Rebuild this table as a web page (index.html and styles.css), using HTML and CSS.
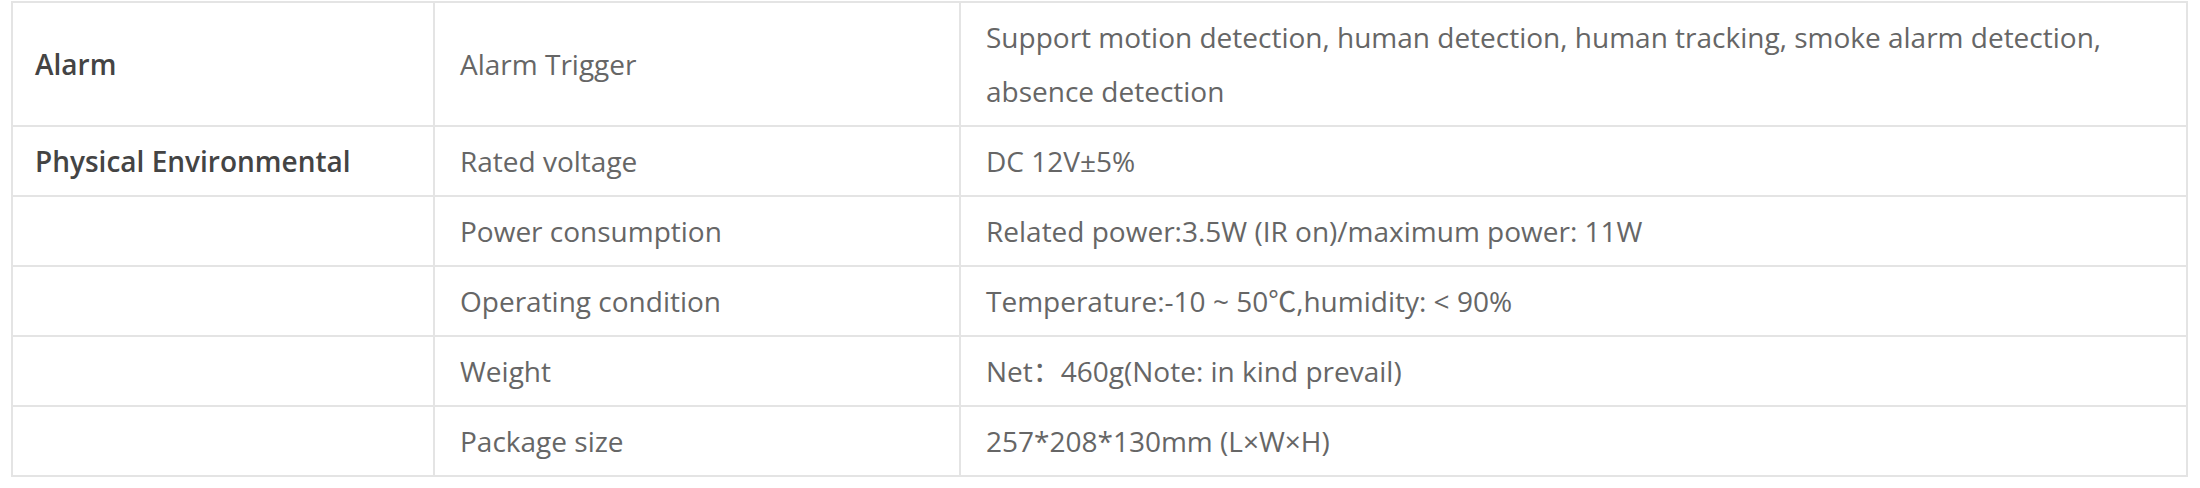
FILE: index.html
```html
<!DOCTYPE html>
<html lang="en">
<head>
<meta charset="utf-8">
<title>Specifications</title>
<link rel="stylesheet" href="styles.css">
</head>
<body>
<div class="wrap">
<table class="spec">
  <colgroup>
    <col class="c1">
    <col class="c2">
    <col class="c3">
  </colgroup>
  <tbody>
    <tr>
      <td class="cat">Alarm</td>
      <td>Alarm Trigger</td>
      <td>Support motion detection, human detection, human tracking, smoke alarm detection, absence detection</td>
    </tr>
    <tr>
      <td class="cat">Physical Environmental</td>
      <td>Rated voltage</td>
      <td>DC 12V±5%</td>
    </tr>
    <tr>
      <td class="cat"></td>
      <td>Power consumption</td>
      <td>Related power:3.5W (IR on)/maximum power: 11W</td>
    </tr>
    <tr>
      <td class="cat"></td>
      <td>Operating condition</td>
      <td>Temperature:-10 ~ 50℃,humidity: &lt; 90%</td>
    </tr>
    <tr>
      <td class="cat"></td>
      <td>Weight</td>
      <td>Net：460g(Note: in kind prevail)</td>
    </tr>
    <tr>
      <td class="cat"></td>
      <td>Package size</td>
      <td>257*208*130mm (L×W×H)</td>
    </tr>
  </tbody>
</table>
</div>
</body>
</html>
```

FILE: styles.css
```css
html, body {
  margin: 0;
  padding: 0;
  background: #ffffff;
}

.wrap {
  padding: 1px 12px 0 11px;
}

.spec {
  width: 100%;
  table-layout: fixed;
  border-collapse: collapse;
  font-family: "Open Sans", "Noto Sans CJK SC", sans-serif;
  font-size: 28px;
  line-height: 54px;
  color: #666666;
}

.spec .c1 { width: 422px; }
.spec .c2 { width: 526px; }

.spec td {
  border: 2px solid #e4e4e4;
  padding: 7px 26px 7px 25px;
  vertical-align: middle;
  text-align: left;
}

.spec td.cat {
  padding-left: 22px;
  font-weight: 600;
  color: #444444;
}
```
